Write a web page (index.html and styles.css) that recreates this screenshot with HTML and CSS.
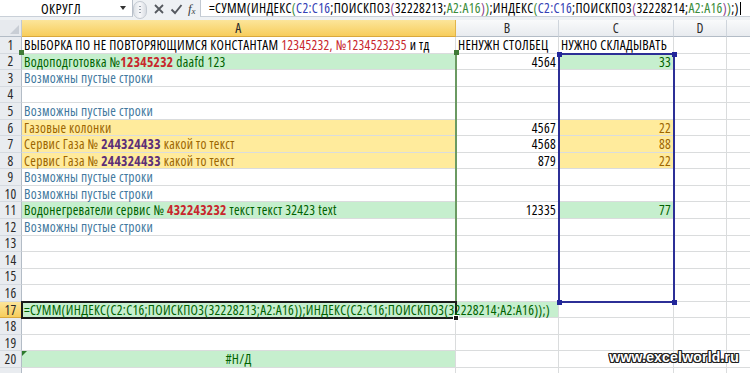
FILE: index.html
```html
<!DOCTYPE html>
<html lang="ru">
<head>
<meta charset="utf-8">
<title>Excel</title>
<link rel="stylesheet" href="styles.css">
</head>
<body>
<div class="app">
  <div class="fbar">
    <div class="namebox"><span class="nb-text">ОКРУГЛ</span><span class="nb-arrow"></span></div>
    <div class="grip"><span class="grip-dots"></span></div>
    <div class="fbtns">
      <svg class="ico" width="12" height="12" viewBox="0 0 12 12"><path d="M2 2 L10 10 M10 2 L2 10" stroke="#55595f" stroke-width="1.8" fill="none"/></svg>
      <svg class="ico" width="13" height="12" viewBox="0 0 13 12"><path d="M1.5 6.5 L5 10 L11.5 2" stroke="#55595f" stroke-width="1.9" fill="none"/></svg>
      <span class="fx">f<sub>x</sub></span>
    </div>
    <div class="finput"><span>=СУММ(ИНДЕКС<span class="pg">(</span><span class="rb">C2:C16</span>;ПОИСКПОЗ<span class="pp">(</span>32228213;<span class="rg">A2:A16</span><span class="pp">)</span><span class="pg">)</span>;ИНДЕКС<span class="pg">(</span><span class="rb">C2:C16</span>;ПОИСКПОЗ<span class="pp">(</span>32228214;<span class="rg">A2:A16</span><span class="pp">)</span><span class="pg">)</span>;)</span><span class="caret"></span></div>
  </div>
  <div class="strip"></div>
  <div class="sheet">
    <div class="corner"><span class="corner-tri"></span></div>
    <div class="ch sel">A</div><div class="ch">B</div><div class="ch">C</div><div class="ch">D</div><div class="ch"></div>

    <div class="rh">1</div>
    <div class="c">ВЫБОРКА ПО НЕ ПОВТОРЯЮЩИМСЯ КОНСТАНТАМ <span class="red">12345232, №1234523235</span> и тд</div>
    <div class="c">НЕНУЖН СТОЛБЕЦ</div><div class="c">НУЖНО СКЛАДЫВАТЬ</div><div class="c"></div><div class="c"></div>

    <div class="rh">2</div>
    <div class="c good">Водоподготовка №<b class="red">12345232</b> daafd 123</div>
    <div class="c num">4564</div><div class="c num good">33</div><div class="c"></div><div class="c"></div>

    <div class="rh">3</div>
    <div class="c note">Возможны пустые строки</div>
    <div class="c"></div><div class="c"></div><div class="c"></div><div class="c"></div>

    <div class="rh">4</div>
    <div class="c"></div><div class="c"></div><div class="c"></div><div class="c"></div><div class="c"></div>

    <div class="rh">5</div>
    <div class="c note">Возможны пустые строки</div>
    <div class="c"></div><div class="c"></div><div class="c"></div><div class="c"></div>

    <div class="rh">6</div>
    <div class="c neutral">Газовые колонки</div>
    <div class="c num">4567</div><div class="c num neutral">22</div><div class="c"></div><div class="c"></div>

    <div class="rh">7</div>
    <div class="c neutral">Сервис Газа № <b class="purple">244324433</b> какой то текст</div>
    <div class="c num">4568</div><div class="c num neutral">88</div><div class="c"></div><div class="c"></div>

    <div class="rh">8</div>
    <div class="c neutral">Сервис Газа № <b class="purple">244324433</b> какой то текст</div>
    <div class="c num">879</div><div class="c num neutral">22</div><div class="c"></div><div class="c"></div>

    <div class="rh">9</div>
    <div class="c note">Возможны пустые строки</div>
    <div class="c"></div><div class="c"></div><div class="c"></div><div class="c"></div>

    <div class="rh">10</div>
    <div class="c note">Возможны пустые строки</div>
    <div class="c"></div><div class="c"></div><div class="c"></div><div class="c"></div>

    <div class="rh">11</div>
    <div class="c good">Водонегреватели сервис № <b class="red">432243232</b> текст текст 32423 text</div>
    <div class="c num">12335</div><div class="c num good">77</div><div class="c"></div><div class="c"></div>

    <div class="rh">12</div>
    <div class="c note">Возможны пустые строки</div>
    <div class="c"></div><div class="c"></div><div class="c"></div><div class="c"></div>

    <div class="rh">13</div>
    <div class="c"></div><div class="c"></div><div class="c"></div><div class="c"></div><div class="c"></div>
    <div class="rh">14</div>
    <div class="c"></div><div class="c"></div><div class="c"></div><div class="c"></div><div class="c"></div>
    <div class="rh">15</div>
    <div class="c"></div><div class="c"></div><div class="c"></div><div class="c"></div><div class="c"></div>
    <div class="rh">16</div>
    <div class="c"></div><div class="c"></div><div class="c"></div><div class="c"></div><div class="c"></div>

    <div class="rh sel">17</div>
    <div class="c good"><span class="over">=СУММ(ИНДЕКС(C2:C16;ПОИСКПОЗ(32228213;A2:A16));ИНДЕКС(C2:C16;ПОИСКПОЗ(32228214;A2:A16));)</span></div>
    <div class="c good"></div><div class="c"></div><div class="c"></div><div class="c"></div>

    <div class="rh">18</div>
    <div class="c"></div><div class="c"></div><div class="c"></div><div class="c"></div><div class="c"></div>
    <div class="rh">19</div>
    <div class="c"></div><div class="c"></div><div class="c"></div><div class="c"></div><div class="c"></div>

    <div class="rh">20</div>
    <div class="c good center"><span class="err-tri"></span>#Н/Д</div>
    <div class="c"></div><div class="c"></div><div class="c"></div><div class="c"></div>

    <div class="rh"></div>
    <div class="c"></div><div class="c"></div><div class="c"></div><div class="c"></div><div class="c"></div>

    <div class="rng rng-a"><span class="sq tl"></span><span class="sq tr"></span></div>
    <div class="rng rng-c"><span class="sq tl"></span><span class="sq tr"></span><span class="sq bl"></span><span class="sq br"></span></div>
    <div class="active"><span class="handle"></span></div>
  </div>
  <div class="watermark">www.excelworld.ru</div>
</div>
</body>
</html>
```

FILE: styles.css
```css
* { box-sizing: border-box; margin: 0; padding: 0; }
html, body { margin: 0; background: #fff; }
body { width: 750px; height: 373px; overflow: hidden; font-family: "Open Sans", sans-serif; }

.app { position: relative; width: 750px; height: 373px; overflow: hidden; }

/* formula bar */
.fbar { display: flex; height: 17px; background: #eef1f4; color: #000; font-size: 13.5px; font-stretch: 75%; letter-spacing: 0.3px; }
.namebox { width: 133px; display: flex; align-items: center; background: #fff; border-right: 1px solid #b8c0ca; border-bottom: 1px solid #c9d0d8; }
.nb-text { flex: 1; text-align: center; padding-left: 2px; font-size: 14px; letter-spacing: 0.5px; }
.nb-arrow { width: 0; height: 0; border-left: 3.5px solid transparent; border-right: 3.5px solid transparent; border-top: 4px solid #333; margin-right: 6px; }
.grip { width: 14px; margin-top: 1px; height: 18px; border-radius: 7px; background: linear-gradient(90deg, #dfe3e8, #f7f8fa 50%, #d9dde3); border: 1px solid #c4cad2; display: flex; align-items: center; justify-content: center; }
.grip-dots { width: 2px; height: 8px; background: repeating-linear-gradient(#9aa2ad 0 1px, transparent 1px 3px); }
.fbtns { width: 53px; display: flex; align-items: center; justify-content: space-around; padding: 0 2px 0 4px; }
.ico { display: block; }
.fx { font-family: "Liberation Serif", serif; font-style: italic; font-size: 13px; font-stretch: 100%; letter-spacing: 0; color: #3a3e44; line-height: 1; }
.fx sub { font-size: 9px; vertical-align: -1px; }
.finput { flex: 1; display: flex; align-items: center; background: #fff; border-left: 1px solid #c2c9d2; border-bottom: 1px solid #c9d0d8; padding-left: 8px; white-space: nowrap; overflow: hidden; letter-spacing: 0.34px; }
.rb { color: #3341b5; }
.rg { color: #3a8c3a; }
.pg { color: #3a8c3a; }
.pp { color: #8a3c8a; }
.caret { display: inline-block; width: 1px; height: 13px; background: #000; margin-left: 1px; }

.strip { height: 3px; background: #eef1f4; }

/* sheet grid */
.sheet { position: relative; display: grid; grid-template-columns: 22px 434px 103px 115px 53px 60px; grid-template-rows: 17px repeat(21, 16.55px); font-size: 13.5px; font-stretch: 75%; letter-spacing: 0.3px; }
.corner { position: relative; background: #e7eaee; border-right: 1px solid #c2c9d2; border-bottom: 1px solid #b3bcc6; }
.corner-tri { position: absolute; right: 2px; bottom: 2px; width: 0; height: 0; border-left: 9px solid transparent; border-bottom: 9px solid #c9ced5; }
.ch { display: flex; align-items: center; justify-content: center; background: linear-gradient(#f9fafb, #e8ebef); border-right: 1px solid #cfd5dc; border-bottom: 1px solid #b3bcc6; color: #2a2a2a; font-size: 13.5px; }
.ch.sel { background: linear-gradient(#fce59a, #f7cd5c); border-right-color: #e2b54a; border-bottom-color: #d9a83c; }
.rh { display: flex; align-items: center; justify-content: center; background: #e9ecf0; border-right: 1px solid #b3bcc6; border-bottom: 1px solid #d5dae0; color: #2a2a2a; font-size: 13.5px; }
.rh.sel { background: linear-gradient(#fce59a, #f7cd5c); border-bottom-color: #d9a83c; }

.c { display: block; line-height: 16px; padding: 0 2px; border-right: 1px solid #dadcdd; border-bottom: 1px solid #dadcdd; white-space: nowrap; color: #000; min-width: 0; }
.c.num { text-align: right; }
.c.center { text-align: center; position: relative; }
.good { background: #c6efce; color: #006100; }
.neutral { background: #ffeb9c; color: #9c6500; }
.note { color: #41789e; }
.red { color: #c8262c; }
b.red, b.purple { font-weight: 700; }
.purple { color: #5c2f78; }
.over { position: relative; z-index: 1; }
.err-tri { position: absolute; left: 0; top: 0; width: 0; height: 0; border-top: 5px solid #2d7a2d; border-right: 5px solid transparent; }

/* range finder + active cell (overlays placed on grid areas) */
.rng { position: absolute; pointer-events: none; }
.rng-a { grid-column: 2 / 3; grid-row: 3 / 18; left: 0; right: -1px; top: -1px; bottom: -1px; border-right: 2px solid #6b9a62; }
.rng-c { grid-column: 4 / 5; grid-row: 3 / 18; left: -1px; right: -1px; top: -1px; bottom: -1px; border: 2px solid #2c2f96; }
.sq { position: absolute; width: 5px; height: 5px; }
.rng-a .sq { background: #3f7a37; }
.rng-c .sq { background: #22269a; }
.sq.tl { left: -3px; top: -3px; }
.sq.tr { right: -4px; top: -3px; }
.sq.bl { left: -3px; bottom: -4px; }
.sq.br { right: -4px; bottom: -4px; }
.active { position: absolute; grid-column: 2 / 3; grid-row: 18 / 19; left: -1px; right: -1px; top: -1px; bottom: -1px; border: 2px solid #1a1a1a; }
.handle { position: absolute; right: -4px; bottom: -4px; width: 6px; height: 6px; background: #1a1a1a; border: 1px solid #fff; }

.watermark { position: absolute; right: 11px; bottom: 8px; font-family: "Liberation Sans", Arial, sans-serif; font-weight: 700; font-size: 14px; color: #fff; letter-spacing: 0.2px; text-shadow: 1px 0 0 #222, -1px 0 0 #222, 0 1px 0 #222, 0 -1px 0 #222, 1px 1px 0 #222, -1px -1px 0 #222, 1px -1px 0 #222, -1px 1px 0 #222; }
```
